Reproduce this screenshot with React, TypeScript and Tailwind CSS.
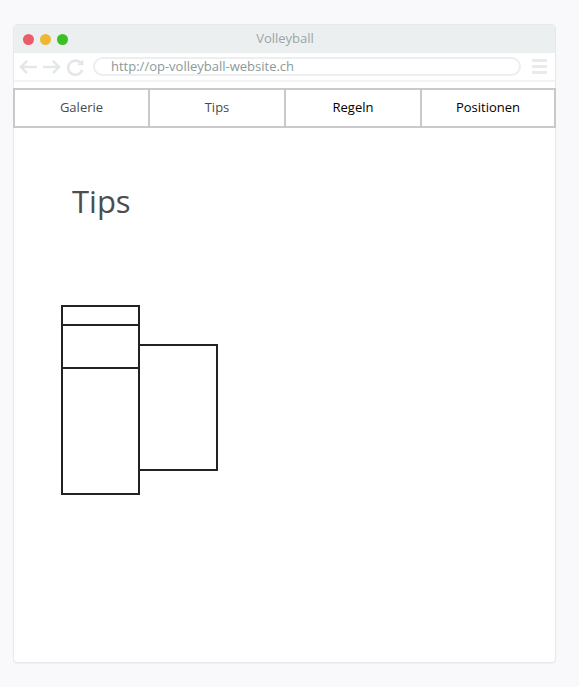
const navItems = [
  { label: "Galerie", color: "text-[#4a4a4a]" },
  { label: "Tips", color: "text-[#4a4a4a]" },
  { label: "Regeln", color: "text-black" },
  { label: "Positionen", color: "text-black" },
];

function BrowserIcons() {
  return (
    <div className="flex items-center gap-[4px] text-[#e3e7e8]">
      <svg width="19" height="16" viewBox="0 0 20 16" fill="none" stroke="currentColor" strokeWidth="2.6">
        <path d="M19 8H2M8.5 1.5 2 8l6.5 6.5" />
      </svg>
      <svg width="19" height="16" viewBox="0 0 20 16" fill="none" stroke="currentColor" strokeWidth="2.6">
        <path d="M1 8h17M11.5 1.5 18 8l-6.5 6.5" />
      </svg>
      <svg width="19" height="18" viewBox="0 0 20 18" fill="none" stroke="currentColor" strokeWidth="2.8" className="ml-[1px]">
        <path d="M16 5.5A7.5 7.5 0 1 0 17 12" />
        <path d="M17.5 1.5v5h-5" fill="currentColor" strokeWidth="1.5" />
      </svg>
    </div>
  );
}

export default function App() {
  return (
    <div className="h-[687px] w-[579px] bg-[#f9f9fb] pl-[13px] pt-[24px] font-['Open_Sans',sans-serif]">
      <div className="flex h-[639px] w-[543px] flex-col rounded-[4px] border border-[#e6e9eb] bg-white shadow-[0_1px_1px_rgba(0,0,0,0.04)]">
        {/* title bar */}
        <div className="relative flex h-[28px] shrink-0 items-center rounded-t-[4px] bg-[#eceff0] px-[9px]">
          <div className="flex gap-[6px]">
            <span className="h-[11px] w-[11px] rounded-full bg-[#ec5b6a]" />
            <span className="h-[11px] w-[11px] rounded-full bg-[#efb830]" />
            <span className="h-[11px] w-[11px] rounded-full bg-[#3cbf24]" />
          </div>
          <div className="absolute inset-0 flex items-center justify-center pl-[1px] text-[13px] text-[#9aa6a6]">Volleyball</div>
        </div>

        {/* address row */}
        <div className="flex h-[29px] shrink-0 items-center border-b-2 border-[#f1f3f4] pl-[5px] pr-[8px]">
          <BrowserIcons />
          <div className="ml-[8px] flex h-[19px] flex-1 items-center rounded-full border-2 border-[#eceff0] pl-[16px] text-[13px] text-[#8b9a9a]">
            http://op-volleyball-website.ch
          </div>
          <div className="ml-[11px] flex flex-col gap-[3px]">
            <span className="h-[3px] w-[15px] bg-[#e8ebec]" />
            <span className="h-[3px] w-[15px] bg-[#e8ebec]" />
            <span className="h-[3px] w-[15px] bg-[#e8ebec]" />
          </div>
        </div>

        {/* nav */}
        <div className="-mx-[1px] mt-[6px] grid h-[40px] shrink-0 grid-cols-[133px_136px_136px_1fr] border-2 border-[#c9c9c9]">
          {navItems.map((item, i) => (
            <div
              key={item.label}
              className={`flex items-center justify-center text-[13px] ${item.color} ${i > 0 ? "border-l-2 border-[#c9c9c9]" : ""}`}
            >
              {item.label}
            </div>
          ))}
        </div>

        {/* content */}
        <div className="flex-1 pl-[58px] pt-[51px]">
          <h1 className="text-[31px] leading-[44px] text-[#4d4d4d]">Tips</h1>

          <div className="ml-[-11px] mt-[82px] flex items-start">
            <div className="flex h-[190px] w-[79px] flex-col border-2 border-[#222]">
              <div className="h-[19px] border-b-2 border-[#222]" />
              <div className="h-[43px] border-b-2 border-[#222]" />
              <div className="flex-1" />
            </div>
            <div className="ml-[-2px] mt-[39px] h-[127px] w-[80px] border-2 border-[#222]" />
          </div>
        </div>
      </div>
    </div>
  );
}
